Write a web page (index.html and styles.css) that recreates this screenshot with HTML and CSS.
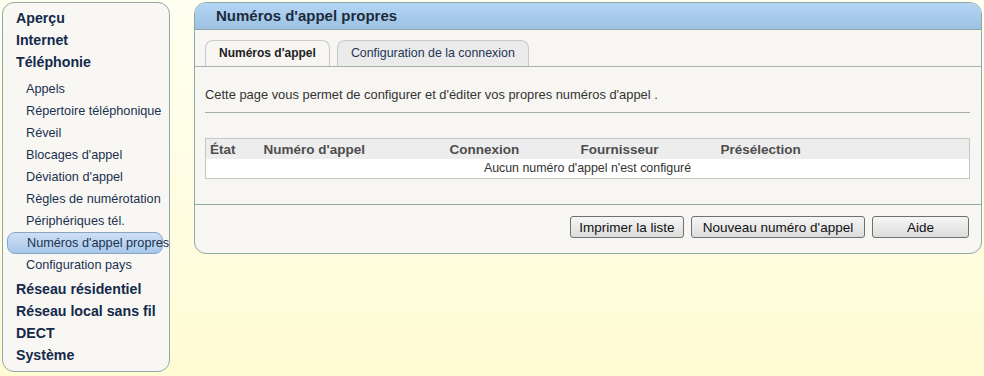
FILE: index.html
```html
<!DOCTYPE html>
<html lang="fr">
<head>
  <meta charset="UTF-8" />
  <title>Numéros d'appel propres</title>
  <link rel="stylesheet" href="styles.css">
</head>
<body>
<div class="page">
  <!-- Left navigation -->
  <nav class="sidebar">
    <ul class="nav">
      <li class="nav-main">Aperçu</li>
      <li class="nav-main">Internet</li>
      <li class="nav-main">Téléphonie
        <ul class="nav-sub">
          <li>Appels</li>
          <li>Répertoire téléphonique</li>
          <li>Réveil</li>
          <li>Blocages d'appel</li>
          <li>Déviation d'appel</li>
          <li>Règles de numérotation</li>
          <li>Périphériques tél.</li>
          <li class="active">Numéros d'appel propres</li>
          <li>Configuration pays</li>
        </ul>
      </li>
      <li class="nav-main">Réseau résidentiel</li>
      <li class="nav-main">Réseau local sans fil</li>
      <li class="nav-main">DECT</li>
      <li class="nav-main">Système</li>
    </ul>
  </nav>

  <!-- Content panel -->
  <div class="panel">
    <div class="panel-head">Numéros d'appel propres</div>
    <div class="tabs">
      <span class="tab tab-active">Numéros d'appel</span>
      <span class="tab">Configuration de la connexion</span>
    </div>
    <div class="panel-body">
      <p class="intro">Cette page vous permet de configurer et d'éditer vos propres numéros d'appel .</p>
      <table class="calls">
        <thead>
          <tr>
            <th class="col-state">État</th>
            <th class="col-number">Numéro d'appel</th>
            <th class="col-conn">Connexion</th>
            <th class="col-prov">Fournisseur</th>
            <th>Présélection</th>
          </tr>
        </thead>
        <tbody>
          <tr>
            <td colspan="5" class="empty">Aucun numéro d'appel n'est configuré</td>
          </tr>
        </tbody>
      </table>
    </div>
    <div class="panel-foot">
      <button type="button" class="btn btn-print">Imprimer la liste</button>
      <button type="button" class="btn btn-new">Nouveau numéro d'appel</button>
      <button type="button" class="btn btn-help">Aide</button>
    </div>
  </div>
</div>
</body>
</html>
```

FILE: styles.css
```css
html, body {
  margin: 0;
  padding: 0;
  height: 100%;
}
body {
  background: linear-gradient(#fffff1, #fffcd4);
  font-family: "Liberation Sans", Arial, sans-serif;
  color: #333;
}
.page {
  display: flex;
  align-items: flex-start;
  gap: 24px;
  padding: 2px;
}

/* Sidebar */
.sidebar {
  box-sizing: border-box;
  width: 168px;
  height: 370px;
  flex-shrink: 0;
  background: #f8f7f3;
  border: 1px solid #8fa9a3;
  border-radius: 12px;
  overflow: hidden;
  padding-top: 4px;
}
.nav, .nav-sub {
  list-style: none;
  margin: 0;
  padding: 0;
}
.nav-main {
  font-size: 14.2px;
  font-weight: bold;
  line-height: 22px;
  color: #14294b;
  padding-left: 13px;
  white-space: nowrap;
}
.nav-sub {
  margin: 5px 0 2px -9px;
}
.nav-sub li {
  font-size: 12.7px;
  font-weight: normal;
  line-height: 22px;
  color: #1b3150;
  padding-left: 19px;
}
.nav-sub li.active {
  background: linear-gradient(#cde0f4, #a7c7ea);
  border: 1px solid #86a6c4;
  border-radius: 8px;
  width: 156px;
  box-sizing: border-box;
  line-height: 20px;
}

/* Panel */
.panel {
  box-sizing: border-box;
  width: 789px;
  background: #f7f6f2;
  border: 1px solid #8fa9a3;
  border-radius: 12px;
}
.panel-head {
  height: 26px;
  line-height: 26px;
  padding-left: 21px;
  font-size: 15px;
  font-weight: bold;
  color: #1d2b3c;
  background: linear-gradient(#b4d6f6, #9dc1e2);
  border-bottom: 1px solid #8fa9a3;
  border-radius: 11px 11px 0 0;
}
.tabs {
  display: flex;
  gap: 7px;
  padding: 10px 0 0 10px;
  border-bottom: 1px solid #a3b3ae;
}
.tab {
  height: 25px;
  line-height: 25px;
  padding: 0 13px;
  font-size: 12.4px;
  color: #1f3556;
  background: #ebebeb;
  border: 1px solid #c9c9c9;
  border-bottom: none;
  border-radius: 8px 8px 0 0;
}
.tab-active {
  font-size: 12px;
  font-weight: bold;
  color: #222;
  background: #f7f6f2;
}
.panel-body {
  padding: 0 11px 25px 10px;
}
.intro {
  margin: 20px 0 0;
  padding-bottom: 9px;
  font-size: 12.9px;
  line-height: 16px;
  color: #333;
  border-bottom: 1px solid #a3aeab;
}
.calls {
  width: 100%;
  margin-top: 25px;
  table-layout: fixed;
  border-collapse: collapse;
  border: 1px solid #c6c6c6;
  background: #fff;
}
.calls th {
  box-sizing: border-box;
  height: 20px;
  padding: 1px 0 0 4px;
  text-align: left;
  white-space: nowrap;
  font-size: 13.5px;
  font-weight: bold;
  color: #4d4d4d;
  background: #ededed;
}
.col-state { width: 54px; }
.col-number { width: 186px; }
.col-conn { width: 131px; }
.col-prov { width: 140px; }
.calls td.empty {
  height: 19px;
  padding: 0;
  text-align: center;
  font-size: 12.4px;
  color: #333;
}
.panel-foot {
  display: flex;
  justify-content: flex-end;
  gap: 7px;
  padding: 11px 12px 15px;
  border-top: 1px solid #8fa9a3;
}
.btn {
  height: 22px;
  padding: 1px 0 0;
  font-family: "Liberation Sans", Arial, sans-serif;
  font-size: 13.5px;
  color: #111;
  background: linear-gradient(#f6f6f6, #dcdcdc);
  border: 1px solid #707070;
  border-radius: 3px;
}
.btn-print { width: 114px; }
.btn-new { width: 174px; }
.btn-help { width: 97px; }
```
